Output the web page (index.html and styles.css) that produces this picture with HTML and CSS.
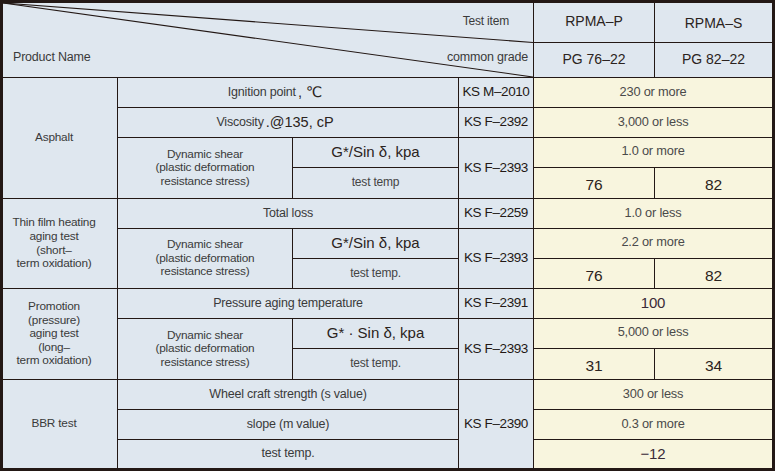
FILE: index.html
```html
<!DOCTYPE html>
<html lang="en">
<head>
<meta charset="utf-8">
<title>RPMA test table</title>
<link rel="stylesheet" href="styles.css">
</head>
<body>
<div class="sheet">
  <div class="c head-diag">
    <svg class="diag" viewBox="0 0 530 74" preserveAspectRatio="none" aria-hidden="true">
      <line x1="0" y1="0" x2="530" y2="39.5" />
      <line x1="0" y1="0" x2="530" y2="74" />
    </svg>
    <div class="hd-row1"><span>Test item</span></div>
    <div class="hd-row2"><span>Product Name</span><span>common grade</span></div>
  </div>
  <div class="c grade r-p">RPMA–P</div>
  <div class="c grade r-s">RPMA–S</div>
  <div class="c grade">PG 76–22</div>
  <div class="c grade">PG 82–22</div>

  <!-- Asphalt -->
  <div class="c group g-asphalt">Asphalt</div>
  <div class="c wide shift">Ignition point <span class="big">, ℃</span></div>
  <div class="c ks">KS M–2010</div>
  <div class="c v span2">230 or more</div>

  <div class="c wide shift">Viscosity <span class="big">.@135, cP</span></div>
  <div class="c ks">KS F–2392</div>
  <div class="c v span2">3,000 or less</div>

  <div class="c dyn r5">Dynamic shear<br>(plastic deformation<br>resistance stress)</div>
  <div class="c gsin">G*/Sin δ, kpa</div>
  <div class="c ks r5">KS F–2393</div>
  <div class="c v span2 up">1.0 or more</div>

  <div class="c small">test temp</div>
  <div class="c v num">76</div>
  <div class="c v num">82</div>

  <!-- Thin film -->
  <div class="c group g-thin">Thin film heating<br>aging test<br>(short–<br>term oxidation)</div>
  <div class="c wide">Total loss</div>
  <div class="c ks">KS F–2259</div>
  <div class="c v span2">1.0 or less</div>

  <div class="c dyn r8">Dynamic shear<br>(plastic deformation<br>resistance stress)</div>
  <div class="c gsin">G*/Sin δ, kpa</div>
  <div class="c ks r8">KS F–2393</div>
  <div class="c v span2 up">2.2 or more</div>

  <div class="c small">test temp.</div>
  <div class="c v num">76</div>
  <div class="c v num">82</div>

  <!-- Promotion -->
  <div class="c group g-prom">Promotion<br>(pressure)<br>aging test<br>(long–<br>term oxidation)</div>
  <div class="c wide">Pressure aging temperature</div>
  <div class="c ks">KS F–2391</div>
  <div class="c v span2 hundred">100</div>

  <div class="c dyn r11">Dynamic shear<br>(plastic deformation<br>resistance stress)</div>
  <div class="c gsin">G* · Sin δ, kpa</div>
  <div class="c ks r11">KS F–2393</div>
  <div class="c v span2 up">5,000 or less</div>

  <div class="c small">test temp.</div>
  <div class="c v num">31</div>
  <div class="c v num">34</div>

  <!-- BBR -->
  <div class="c group g-bbr">BBR test</div>
  <div class="c wide">Wheel craft strength (s value)</div>
  <div class="c ks r13">KS F–2390</div>
  <div class="c v span2">300 or less</div>

  <div class="c wide">slope (m value)</div>
  <div class="c v span2">0.3 or more</div>

  <div class="c wide">test temp.</div>
  <div class="c v span2 hundred">−12</div>
</div>
</body>
</html>
```
FILE: styles.css
```css
html, body {
  margin: 0;
  padding: 0;
  background: #ffffff;
}

.sheet {
  width: 775px;
  height: 471px;
  box-sizing: border-box;
  border: 3px solid #231815;
  background: #231815;
  display: grid;
  grid-template-columns: 114px 174px 165px 74px 120px 117px;
  grid-template-rows: 39px 34px 29px 29px 29px 30px 29px 29px 29px 29px 29px 30px 29px 29px 28px;
  gap: 1px;
  font-family: "Liberation Sans", Arial, "DejaVu Sans", sans-serif;
}

.c {
  background: #dfe7ef;
  color: #3a3a3a;
  font-size: 12.5px;
  letter-spacing: -0.2px;
  display: flex;
  align-items: center;
  justify-content: center;
  text-align: center;
  line-height: 1.1;
}

.v {
  background: #f8f5de;
  color: #4a4a4a;
  font-size: 12.8px;
}

.span2 { grid-column: span 2; }
.wide { grid-column: span 2; }
.shift { padding-right: 26px; }

.up { padding-bottom: 3px; }

/* header */
.head-diag {
  grid-column: 1 / 5;
  grid-row: 1 / 3;
  position: relative;
  display: grid;
  grid-template-rows: 39px 35px;
  align-items: stretch;
  justify-content: stretch;
  color: #3a3a3a;
}

.diag {
  position: absolute;
  inset: 0;
  width: 100%;
  height: 100%;
}

.diag line {
  stroke: #231815;
  stroke-width: 1.1;
  vector-effect: non-scaling-stroke;
}

.hd-row1 {
  display: flex;
  justify-content: flex-end;
  align-items: center;
  padding-right: 24px;
  padding-bottom: 2px;
  font-size: 12px;
}

.hd-row2 {
  display: flex;
  justify-content: space-between;
  align-items: center;
  padding: 0 5px 4px 10px;
  font-size: 12.5px;
}

.grade {
  font-size: 14px;
  letter-spacing: 0;
  color: #2b2320;
}

.r-p { padding-bottom: 2px; }
.r-s { padding-top: 2px; }

/* left group column */
.group {
  grid-column: 1;
  font-size: 11.8px;
  line-height: 13.6px;
  padding-right: 12px;
}

.g-asphalt { grid-row: 3 / 7; }
.g-thin { grid-row: 7 / 10; }
.g-prom { grid-row: 10 / 13; }
.g-bbr { grid-row: 13 / 16; }

.dyn {
  grid-column: 2;
  font-size: 11.8px;
  line-height: 13.6px;
}

.r5 { grid-row: 5 / 7; }
.r8 { grid-row: 8 / 10; }
.r11 { grid-row: 11 / 13; }
.r13 { grid-row: 13 / 16; }

.ks.r5, .ks.r8, .ks.r11, .ks.r13 { grid-column: 4; }

.ks {
  font-size: 13.5px;
  letter-spacing: -0.4px;
  color: #231815;
}

.gsin {
  font-size: 15px;
  letter-spacing: 0;
  color: #2b2320;
}

.small {
  font-size: 12px;
  color: #444;
}

.big {
  font-size: 14.5px;
  letter-spacing: 0;
  margin-left: 2px;
  color: #2b2320;
}

.num {
  font-size: 15.5px;
  color: #2b2320;
  padding-top: 4px;
}

.hundred {
  font-size: 15px;
  color: #3a2a38;
}
```
